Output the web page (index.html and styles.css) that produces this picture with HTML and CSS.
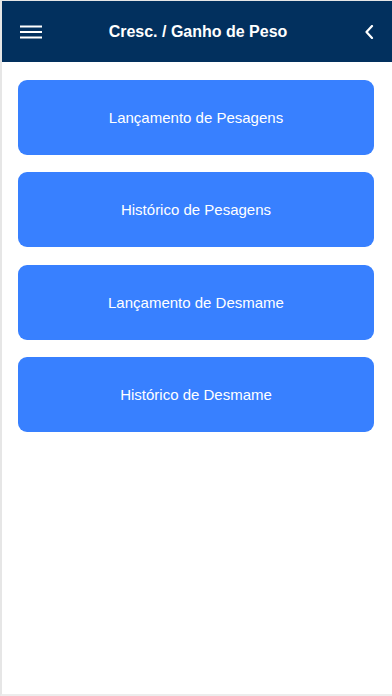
FILE: index.html
```html
<!DOCTYPE html>
<html lang="pt">
<head>
<meta charset="utf-8">
<meta name="viewport" content="width=device-width, initial-scale=1">
<title>Cresc. / Ganho de Peso</title>
<link rel="stylesheet" href="styles.css">
</head>
<body>
<div class="app">
  <header class="toolbar">
    <button class="icon-btn menu" aria-label="Menu">
      <svg width="22" height="14" viewBox="0 0 22 14"><path d="M0 1.5H22M0 7H22M0 12.5H22" stroke="#fff" stroke-width="2"/></svg>
    </button>
    <h1 class="title">Cresc. / Ganho de Peso</h1>
    <button class="icon-btn back" aria-label="Voltar">
      <svg width="10" height="14" viewBox="0 0 10 14"><path d="M8 1L2.5 7L8 13" fill="none" stroke="#fff" stroke-width="2.2" stroke-linecap="round" stroke-linejoin="round"/></svg>
    </button>
  </header>
  <main class="content">
    <button class="action">Lançamento de Pesagens</button>
    <button class="action">Histórico de Pesagens</button>
    <button class="action">Lançamento de Desmame</button>
    <button class="action">Histórico de Desmame</button>
  </main>
</div>
</body>
</html>
```

FILE: styles.css
```css
* { box-sizing: border-box; }
html, body { margin: 0; padding: 0; background: #ffffff; }
body { font-family: "Liberation Sans", Arial, sans-serif; }
.app {
  width: 392px;
  height: 696px;
  border-left: 2px solid #e6e6e6;
  border-bottom: 2px solid #ececec;
  border-top: 1px solid #e6e6e6;
  display: flex;
  flex-direction: column;
  background: #fff;
}
.toolbar {
  height: 61px;
  background: #02305e;
  display: grid;
  grid-template-columns: 1fr auto 1fr;
  align-items: center;
  padding: 0 16px 0 18px;
  flex-shrink: 0;
}
.icon-btn {
  background: none;
  border: 0;
  padding: 0;
  display: flex;
  align-items: center;
  cursor: pointer;
}
.menu { justify-self: start; }
.back { justify-self: end; padding-right: 2px; }
.title {
  margin: 0;
  color: #fff;
  font-size: 16px;
  font-weight: bold;
  white-space: nowrap;
}
.content {
  padding: 18px 18px 0 16px;
  display: flex;
  flex-direction: column;
  gap: 17.4px;
}
.action {
  height: 75px;
  width: 100%;
  border: 0;
  border-radius: 9px;
  background: #3880ff;
  color: #fff;
  font-family: "Liberation Sans", Arial, sans-serif;
  font-size: 15px;
  cursor: pointer;
}
```
